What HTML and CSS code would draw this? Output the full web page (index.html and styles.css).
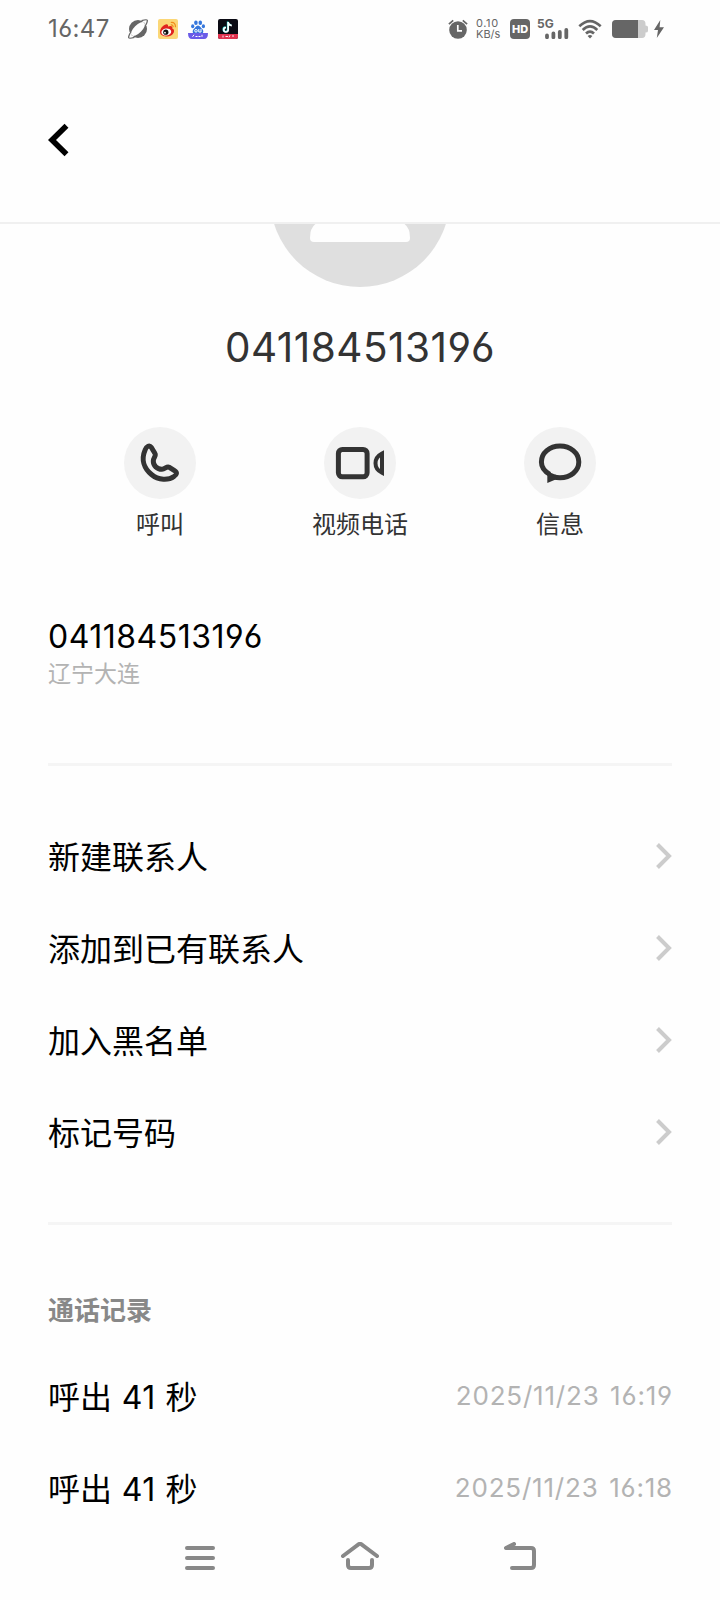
FILE: index.html
```
<!DOCTYPE html>
<html lang="zh-CN">
<head>
<meta charset="utf-8">
<title>通话详情</title>
<meta name="viewport" content="width=device-width, initial-scale=1.0">
<link rel="stylesheet" href="styles.css">
</head>
<body>
  <div class="status">
    <span class="clock">16:47</span>
    <div class="apps">
      <svg width="20" height="20" viewBox="0 0 20 20">
        <circle cx="10" cy="10" r="9" fill="#666"/>
        <ellipse cx="10" cy="10" rx="9" ry="4" fill="#fefefe" transform="rotate(-45 10 10)"/>
        <path d="M13.500 1.600Q19 .2 19.300 1.300T18 5.800M6.500 18.400Q1 19.800 .7 18.700T2 14.200" fill="none" stroke="#666" stroke-width="1.300"/>
      </svg>
      <svg width="20" height="20" viewBox="0 0 20 20">
        <rect width="20" height="20" rx="2" fill="#fbd777"/>
        <path d="M2 13C2 9 6 5 9 5.200q1.500.3 1 2.200 3-1 4.200.4.500.8 0 1.800 2.600 1 1.600 3.900C14.500 16.500 11 18 8 17.500 4.500 17.200 2 15.500 2 13z" fill="#e0241f"/>
        <ellipse cx="8.300" cy="13" rx="4.900" ry="3.500" fill="#fff" transform="rotate(-8 8.300 13)"/>
        <circle cx="7.800" cy="13.200" r="2.600" fill="#111"/>
        <circle cx="7" cy="13.700" r=".9" fill="#fff"/>
        <path d="M12.800 3.500q4.800-.7 4.700 4.800M12.800 5.900q2.500-.2 2.300 2.200" fill="none" stroke="#f08a1c" stroke-width="1.200"/>
      </svg>
      <svg width="20" height="20" viewBox="0 0 20 20">
        <g fill="#3476dc">
          <ellipse cx="7.900" cy="3.700" rx="1.800" ry="2.300"/>
          <ellipse cx="12.300" cy="3.700" rx="1.800" ry="2.300"/>
          <ellipse cx="4.700" cy="7.300" rx="1.600" ry="2"/>
          <ellipse cx="15.400" cy="7.300" rx="1.600" ry="2"/>
          <path d="M10 6.500c2 0 3 2.500 4.500 3.800 1.500 1.600.8 4.700-1.500 4.700H7c-2.300 0-3-3.100-1.500-4.700C7 9 8 6.500 10 6.500z"/>
        </g>
        <circle cx="8" cy="11.800" r="1.300" fill="none" stroke="#fff"/>
        <path d="M10.800 10v3h2.200v-3" fill="none" stroke="#fff"/>
        <path d="M0 14h20q0 6-4 6H4q-4 0-4-6z" fill="#6a5be8"/>
        <path d="M4.500 17.800l1.500-2M7.500 17.500h2M10.500 17.500h2M14 15.800v2" stroke="#fff" stroke-width="1"/>
      </svg>
      <svg width="20" height="20" viewBox="0 0 20 20">
        <rect width="20" height="20" rx="2" fill="#0b0b14"/>
        <path d="M10.200 3v7.800a2.200 2.200 0 1 1-2.200-2.200M10.200 3.400q.5 3 3.600 3.200" fill="none" stroke="#2de2e0" stroke-width="1.700" transform="translate(-.5 -.4)"/>
        <path d="M10.200 3v7.800a2.200 2.200 0 1 1-2.200-2.200M10.200 3.400q.5 3 3.600 3.200" fill="none" stroke="#fff" stroke-width="1.700"/>
        <path d="M0 15h20v3q0 2-2 2H2q-2 0-2-2z" fill="#e0324f"/>
        <path d="M5 16.500v2M7.500 17.500h2.500M12 16.300l-1 2M14 17h2" stroke="#fff" stroke-width=".9"/>
      </svg>
    </div>
    <div class="signals">
      <svg class="alarm" width="20" height="20" viewBox="0 0 20 20">
        <circle cx="10" cy="11" r="8.800" fill="#666"/>
        <path d="M.9 5.200L5.200 1.300M19.100 5.200l-4.300-3.900" stroke="#666" stroke-width="1.700"/>
        <path d="M9.800 6v5.800h4.200" fill="none" stroke="#fff" stroke-width="1.700"/>
      </svg>
      <div class="speed"><span>0.10</span><span>KB/s</span></div>
      <span class="hd">HD</span>
      <div class="cell">
        <span>5G</span>
        <svg width="24" height="11" viewBox="0 0 24 11">
          <path d="M2 7.500v1.700M8.400 5.500v3.700M14.800 4v5.200M21.300 2v7.200" stroke="#666" stroke-width="3.800" stroke-linecap="round"/>
        </svg>
      </div>
      <svg class="wifi" width="24" height="20" viewBox="0 0 24 20">
        <path d="M1.300 7.300Q12-3 22.700 7.300M4.700 11Q12 3.900 19.300 11M8 14.500q4-3.900 8 0" fill="none" stroke="#666" stroke-width="2.600"/>
        <path d="M9.600 17Q12 15 14.400 17L12 19.600z" fill="#666"/>
      </svg>
      <svg class="battery" width="36" height="18" viewBox="0 0 36 18">
        <path d="M4 0h26q3.500 0 3.500 4v1.500q2.500 0 2.500 1.500v4q0 1.500-2.500 1.500V14q0 4-3.500 4H4q-4 0-4-4V4q0-4 4-4z" fill="#ccc"/>
        <path d="M4 0h22v18H4q-4 0-4-4V4q0-4 4-4z" fill="#666"/>
      </svg>
      <svg width="10" height="18" viewBox="0 0 10 18">
        <path d="M6.300 0L0 10h4L2.800 18 10 7.200H5.600z" fill="#666"/>
      </svg>
    </div>
  </div>

  <div class="header">
    <svg width="22" height="34" viewBox="0 0 22 34">
      <path d="M18.500 2.800L4 17l14.500 14.200" fill="none" stroke="#000" stroke-width="5.600"/>
    </svg>
  </div>

  <div class="content">
    <svg class="avatar" width="180" height="180" viewBox="0 0 180 180">
      <circle cx="90" cy="90" r="90" fill="#dfdfdf"/>
      <circle cx="90" cy="73" r="30" fill="#fefefe"/>
      <path d="M40 131q0-17 16-17h68q16 0 16 17 0 4-4 4H44q-4 0-4-4z" fill="#fefefe"/>
    </svg>
    <h1 class="title">041184513196</h1>

    <div class="actions">
      <div class="action">
        <svg width="72" height="72" viewBox="0 0 72 72">
          <circle cx="36" cy="36" r="36" fill="#f2f2f2"/>
          <path d="M21 23.200C22.500 19 25.500 17.800 27.400 20.500L31 26.600C32.400 28.700 29.400 30.500 29.300 34 29.200 38.500 33 42.400 38 42.300 41 42.200 42.800 39 45 40.200L50.500 43.700C53.600 45.600 52.700 47.800 50 49.500 44.500 53.600 34.500 53.500 27.500 47.500 20 41.300 17 32.500 21 23.200z" fill="none" stroke="#333" stroke-width="5" stroke-linejoin="round"/>
        </svg>
        <span>呼叫</span>
      </div>
      <div class="action">
        <svg width="72" height="72" viewBox="0 0 72 72">
          <circle cx="36" cy="36" r="36" fill="#f2f2f2"/>
          <rect x="14.400" y="22.400" width="28.700" height="27.400" rx="4" fill="none" stroke="#333" stroke-width="5"/>
          <path d="M58 26.500v19.300Q51.500 42.500 51.500 36.200T58 26.500z" fill="none" stroke="#333" stroke-width="4"/>
        </svg>
        <span>视频电话</span>
      </div>
      <div class="action">
        <svg width="72" height="72" viewBox="0 0 72 72">
          <circle cx="36" cy="36" r="36" fill="#f2f2f2"/>
          <path d="M25.800 47.400C20 44 17.400 39.800 17.400 35 17.400 26 25.500 19 36 19s18.800 7 18.800 16S46.500 50.700 36 50.700q-3.500 0-6-.7" fill="none" stroke="#333" stroke-width="5"/>
          <path d="M23.300 45.500v10.500l9.500-4 .5-3.500-6-2.500z" fill="#333"/>
        </svg>
        <span>信息</span>
      </div>
    </div>

    <div class="phone">
      <div class="number">041184513196</div>
      <div class="area">辽宁大连</div>
    </div>

    <div class="menu">
      <div class="row"><span>新建联系人</span><svg width="17" height="28" viewBox="0 0 17 28"><path d="M2.500 2.500L14 14 2.500 25.500" fill="none" stroke="#ccc" stroke-width="4"/></svg></div>
      <div class="row"><span>添加到已有联系人</span><svg width="17" height="28" viewBox="0 0 17 28"><path d="M2.500 2.500L14 14 2.500 25.500" fill="none" stroke="#ccc" stroke-width="4"/></svg></div>
      <div class="row"><span>加入黑名单</span><svg width="17" height="28" viewBox="0 0 17 28"><path d="M2.500 2.500L14 14 2.500 25.500" fill="none" stroke="#ccc" stroke-width="4"/></svg></div>
      <div class="row"><span>标记号码</span><svg width="17" height="28" viewBox="0 0 17 28"><path d="M2.500 2.500L14 14 2.500 25.500" fill="none" stroke="#ccc" stroke-width="4"/></svg></div>
    </div>

    <div class="log">
      <h2>通话记录</h2>
      <div class="row"><span>呼出 <span class="sec">41</span> 秒</span><span class="date">2025/11/23 16:19</span></div>
      <div class="row"><span>呼出 <span class="sec">41</span> 秒</span><span class="date">2025/11/23 16:18</span></div>
    </div>
  </div>

  <div class="nav">
    <svg width="40" height="32" viewBox="0 0 40 32">
      <path d="M7 6h26M7 16h26M7 26h26" stroke="#888" stroke-width="4" stroke-linecap="round"/>
    </svg>
    <svg width="40" height="32" viewBox="0 0 40 32">
      <path d="M3 14L18.800 2.200q1.200-.8 2.400 0L37 14M8 18v5q0 3 3 3h18q3 0 3-3v-5" fill="none" stroke="#888" stroke-width="4" stroke-linecap="round"/>
    </svg>
    <svg width="40" height="32" viewBox="0 0 40 32">
      <path d="M14 2L6 6h25q3 0 3 3v14q0 3-3 3H12" fill="none" stroke="#888" stroke-width="4" stroke-linecap="round" stroke-linejoin="round"/>
    </svg>
  </div>
</body>
</html>
```
FILE: styles.css
```
* { box-sizing: border-box }

body {
  margin: 0;
  height: 1600px;
  display: flex;
  flex-direction: column;
  overflow: hidden;
  background: #fefefe;
  color: #000;
  font-family: "Noto Sans CJK SC", sans-serif;
}
svg {
  display: block;
  flex: none;
}
.clock, .speed, .hd, .cell, .title, .number, .date, .sec {
  font-family: Inter, "Noto Sans CJK SC", sans-serif;
  font-feature-settings: "cv03", "cv04";
}

/* status bar */
.status {
  height: 56px;
  padding: 1px 56px 0 48px;
  display: flex;
  align-items: center;
  color: #666;
}
.clock {
  width: 80px;
  padding-top: 1px;
  font-size: 24px;
  letter-spacing: .4px;
  line-height: 54px;
  white-space: nowrap;
}
.apps {
  display: flex;
  gap: 10px;
}
.signals {
  margin-left: auto;
  display: flex;
  align-items: center;
}
.speed {
  width: 25px;
  margin: 0 9px 0 8px;
  display: flex;
  flex-direction: column;
  font-size: 11px;
  line-height: 11px;
  white-space: nowrap;
}
.speed span:first-child { letter-spacing: .6px }
.hd {
  width: 20px;
  height: 20px;
  border-radius: 4px;
  background: #666;
  color: #fff;
  font-size: 11px;
  font-weight: 800;
  line-height: 20px;
  text-align: center;
}
.cell {
  width: 32px;
  height: 20px;
  margin: 0 9px 0 7px;
  display: flex;
  flex-direction: column;
  font-size: 12px;
  font-weight: 700;
  line-height: 9px;
}
.cell svg { margin-left: 8px }
.wifi { margin-right: 10px }
.battery { margin-right: 6px }

.header {
  height: 168px;
  padding: 2px 48px 0;
  display: flex;
  align-items: center;
  border-bottom: 2px solid #f0f0f0;
}

/* scrolled part */
.content {
  height: 1296px;
  padding: 0 48px;
  overflow: hidden;
}
.avatar { margin: -117px auto 0 }
.title {
  margin: 33px 0 0;
  height: 56px;
  color: #333;
  font-size: 40.5px;
  font-weight: 400;
  letter-spacing: .5px;
  line-height: 56px;
  text-align: center;
}
.actions {
  margin: 51px 12px 0;
  display: grid;
  grid-template-columns: repeat(3, 200px);
  justify-content: center;
}
.action {
  display: flex;
  flex-direction: column;
  align-items: center;
  color: #333;
  font-size: 24px;
  line-height: 36px;
}
.action span { margin-top: 6px }
.phone {
  margin-top: 75px;
  height: 150px;
  padding-top: 2px;
  border-bottom: 3px solid #f5f5f5;
}
.number {
  font-size: 32px;
  letter-spacing: .5px;
  line-height: 38px;
}
.area {
  color: #b3b3b3;
  font-size: 23px;
  line-height: 33px;
}
.menu {
  height: 459px;
  padding-top: 44px;
  border-bottom: 3px solid #f5f5f5;
}
.row {
  height: 92px;
  display: flex;
  align-items: center;
  justify-content: space-between;
  font-size: 32px;
}
.menu .row span { padding-bottom: 2px }
.log { padding-top: 65px }
.log h2 {
  margin: 0;
  height: 59px;
  color: #888;
  font-size: 26px;
  font-weight: 700;
  line-height: 38px;
}
.log .row { word-spacing: 2.5px }
.sec { letter-spacing: .6px }
.row .date {
  margin-right: -1px;
  padding-top: 1px;
  color: #b3b3b3;
  font-size: 26px;
  letter-spacing: .8px;
}

.nav {
  height: 80px;
  padding: 0 100px 4px;
  display: flex;
  align-items: center;
  justify-content: center;
  gap: 120px;
}
```
